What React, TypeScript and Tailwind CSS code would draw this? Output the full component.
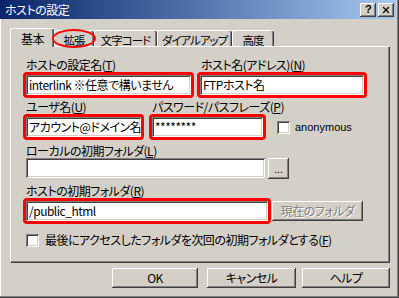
import { X } from "lucide-react";

const raised =
  "bg-[#d4d0c8] shadow-[inset_-1px_-1px_#404040,inset_1px_1px_#ffffff,inset_-2px_-2px_#808080]";
const sunken =
  "shadow-[inset_1px_1px_#808080,inset_-1px_-1px_#ffffff,inset_2px_2px_#404040,inset_-2px_-2px_#d4d0c8]";

const Field = ({ value, w }: { value: string; w: string }) => (
  <div
    className={`${sunken} ${w} h-[20px] bg-white px-[3px] flex items-center text-[12px] leading-none whitespace-nowrap overflow-hidden text-black`}
  >
    {value}
  </div>
);

const Marked = ({ children }: { children: React.ReactNode }) => (
  <div className="border-[3px] border-[#ff0000] rounded-[4px] -ml-[3px] w-fit">{children}</div>
);

const Label = ({ text, k }: { text: string; k: string }) => (
  <div className="h-[14px] text-[12px] leading-[14px] whitespace-nowrap text-black">
    {text}(<u>{k}</u>)
  </div>
);

const Check = () => <div className={`${sunken} w-[13px] h-[13px] bg-white shrink-0`} />;

const tabs = [
  { label: "拡張", w: "w-[40px]" },
  { label: "文字コード", w: "w-[63px]" },
  { label: "ダイアルアップ", w: "w-[75px]" },
  { label: "高度", w: "w-[42px]" },
];

export default function App() {
  return (
    <div className="w-[399px] h-[298px] bg-[#d4d0c8] overflow-hidden font-['Noto_Sans_CJK_JP','Noto_Sans',sans-serif] [font-feature-settings:'palt'] tracking-[-0.5px] text-black">
      <div className="w-[399px] h-[298px] flex flex-col border-r border-b border-r-[#404040] border-b-[#404040] shadow-[inset_-1px_-1px_#808080,inset_1px_0_#ffffff]">
        {/* title bar */}
        <div className="w-[396px] h-[19px] shrink-0 flex items-center justify-between pl-[5px] pr-[2px] bg-gradient-to-r from-[#0a246a] to-[#a6caf0]">
          <span className="text-white text-[12px] leading-none">ホストの設定</span>
          <div className="flex gap-[2px]">
            <div className={`${raised} w-[16px] h-[14px] flex items-center justify-center text-[11px] font-bold leading-none font-['Liberation_Sans',sans-serif]`}>
              ?
            </div>
            <div className={`${raised} w-[16px] h-[14px] flex items-center justify-center`}>
              <X size={10} strokeWidth={3} color="#000" />
            </div>
          </div>
        </div>

        {/* tabs */}
        <div className="mt-[9px] h-[18px] pl-[10px] flex items-end relative">
          <div className="relative z-10 w-[44px] h-[19px] -mb-px bg-[#d4d0c8] border-l border-t border-white rounded-tl-[2px] rounded-tr-[2px] shadow-[inset_-1px_0_#404040,inset_-2px_0_#808080] flex items-start justify-center pt-[3px] text-[12px] leading-[14px]">
            基本
          </div>
          {tabs.map((t) => (
            <div
              key={t.label}
              className={`${t.w} h-[16px] border-l border-t border-white rounded-tl-[2px] rounded-tr-[2px] shadow-[inset_-1px_0_#404040,inset_-2px_0_#808080] flex items-start justify-center pt-[2px] pr-[1px] text-[11.5px] tracking-[-1px] leading-[14px] whitespace-nowrap`}
            >
              {t.label}
            </div>
          ))}
          <div className="absolute left-[52px] top-[1px] w-[44px] h-[19px] rounded-[50%] border-2 border-[#ff0000] z-20" />
        </div>

        {/* panel */}
        <div className="ml-[10px] w-[380px] h-[217px] shrink-0 border-l border-t border-white border-r border-b border-r-[#404040] border-b-[#404040] shadow-[inset_-1px_-1px_#808080] pl-[15px] flex flex-col text-[12px]">
          <div className="mt-[11px] flex">
            <div className="w-[174px] flex flex-col">
              <Label text="ホストの設定名" k="T" />
              <Marked>
                <Field value="interlink ※任意で構いません" w="w-[165px]" />
              </Marked>
            </div>
            <div className="flex flex-col">
              <div className="pl-[1px]">
                <Label text="ホスト名(アドレス)" k="N" />
              </div>
              <Marked>
                <Field value="FTPホスト名" w="w-[164px]" />
              </Marked>
            </div>
          </div>

          <div className="mt-[2px] flex">
            <div className="w-[126px] flex flex-col">
              <Label text="ユーザ名" k="U" />
              <Marked>
                <Field value="アカウント@ドメイン名" w="w-[115px]" />
              </Marked>
            </div>
            <div className="flex flex-col">
              <Label text="パスワード/パスフレーズ" k="P" />
              <div className="flex items-center">
                <Marked>
                  <Field value="********" w="w-[111px]" />
                </Marked>
                <div className="ml-[11px]">
                  <Check />
                </div>
                <span className="ml-[5px] font-['Liberation_Sans',sans-serif] text-[11px] tracking-normal leading-none">anonymous</span>
              </div>
            </div>
          </div>

          <div className="mt-[4px]">
            <Label text="ローカルの初期フォルダ" k="L" />
          </div>
          <div className="flex items-start">
            <Field value="" w="w-[239px]" />
            <div className={`${raised} ml-[3px] w-[21px] h-[21px] flex items-center justify-center text-[10px] tracking-normal leading-none`}>
              ...
            </div>
          </div>

          <div className="mt-[5px]">
            <Label text="ホストの初期フォルダ" k="R" />
          </div>
          <div className="flex items-center">
            <Marked>
              <Field value="/public_html" w="w-[242px]" />
            </Marked>
            <div className={`${raised} ml-[1px] w-[91px] h-[20px] flex items-center justify-center text-[#808080] [text-shadow:1px_1px_#ffffff] text-[12px] leading-none`}>
              現在のフォルダ
            </div>
          </div>

          <div className="mt-[9px] flex items-center">
            <Check />
            <span className="ml-[6px] h-[14px] leading-[14px] whitespace-nowrap">
              最後にアクセスしたフォルダを次回の初期フォルダとする(<u>F</u>)
            </span>
          </div>
        </div>

        {/* buttons */}
        <div className="mt-[5px] pl-[112px] flex text-[12px]">
          <div className={`${raised} w-[86px] h-[20px] flex items-center justify-center leading-none shadow-[inset_-1px_-1px_#000000,inset_1px_1px_#ffffff,inset_-2px_-2px_#808080]`}>
            OK
          </div>
          <div className={`${raised} ml-[9px] w-[89px] h-[20px] flex items-center justify-center leading-none`}>
            キャンセル
          </div>
          <div className={`${raised} ml-[6px] w-[88px] h-[20px] flex items-center justify-center leading-none`}>
            ヘルプ
          </div>
        </div>
      </div>
    </div>
  );
}
